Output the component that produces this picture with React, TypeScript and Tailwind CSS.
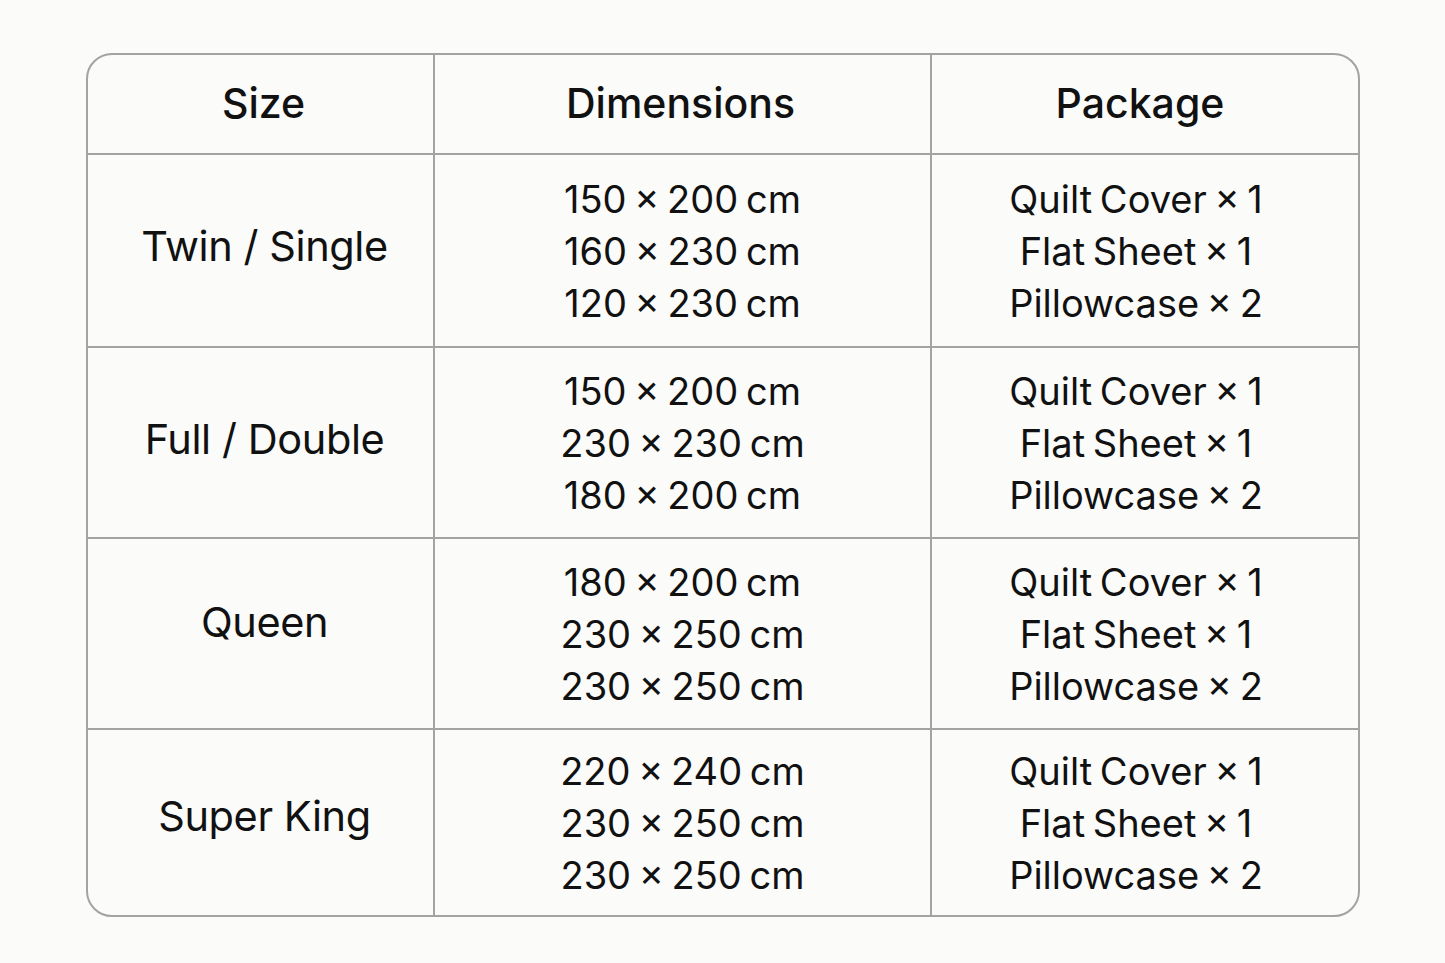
const rows = [
  {
    size: "Twin / Single",
    dims: ["150 × 200 cm", "160 × 230 cm", "120 × 230 cm"],
    h: "h-[193px]",
    lift: "pb-[10px]",
  },
  {
    size: "Full / Double",
    dims: ["150 × 200 cm", "230 × 230 cm", "180 × 200 cm"],
    h: "h-[191px]",
    lift: "pb-[8px]",
  },
  {
    size: "Queen",
    dims: ["180 × 200 cm", "230 × 250 cm", "230 × 250 cm"],
    h: "h-[191px]",
    lift: "pb-[24px]",
  },
  {
    size: "Super King",
    dims: ["220 × 240 cm", "230 × 250 cm", "230 × 250 cm"],
    h: "h-[185px]",
    lift: "pb-[14px]",
  },
]

const pkg = ["Quilt Cover × 1", "Flat Sheet × 1", "Pillowcase × 2"]

export default function App() {
  return (
    <div className="min-h-[963px] w-full bg-[#fbfbfa] pt-[53px] pl-[86px] font-['Inter','Liberation_Sans',sans-serif] text-[#111]">
      <div className="w-[1274px] overflow-hidden rounded-[26px] border-2 border-[#a3a3a3]">
        {/* Header */}
        <div className="grid h-[100px] grid-cols-[347px_497px_1fr] border-b-2 border-[#a3a3a3] text-[41px] font-medium">
          <div className="flex items-center justify-center border-r-2 border-[#a3a3a3] pl-[6px]">Size</div>
          <div className="flex items-center justify-center border-r-2 border-[#a3a3a3] pr-[4px]">Dimensions</div>
          <div className="flex items-center justify-center pr-[10px]">Package</div>
        </div>

        {rows.map((r, i) => (
          <div
            key={r.size}
            className={`grid grid-cols-[347px_497px_1fr] text-[38px] leading-[52px] [word-spacing:-3px] ${r.h} ${
              i < rows.length - 1 ? "border-b-2 border-[#a3a3a3]" : ""
            }`}
          >
            <div
              className={`flex items-center justify-center border-r-2 border-[#a3a3a3] pl-[8px] text-[41.5px] tracking-[-0.01em] [word-spacing:0px] ${r.lift}`}
            >
              {r.size}
            </div>
            <div className="flex flex-col items-center justify-center border-r-2 border-[#a3a3a3]">
              {r.dims.map((d, j) => (
                <div key={j}>{d}</div>
              ))}
            </div>
            <div className="flex flex-col items-center justify-center pr-[18px]">
              {pkg.map((p) => (
                <div key={p}>{p}</div>
              ))}
            </div>
          </div>
        ))}
      </div>
    </div>
  )
}
